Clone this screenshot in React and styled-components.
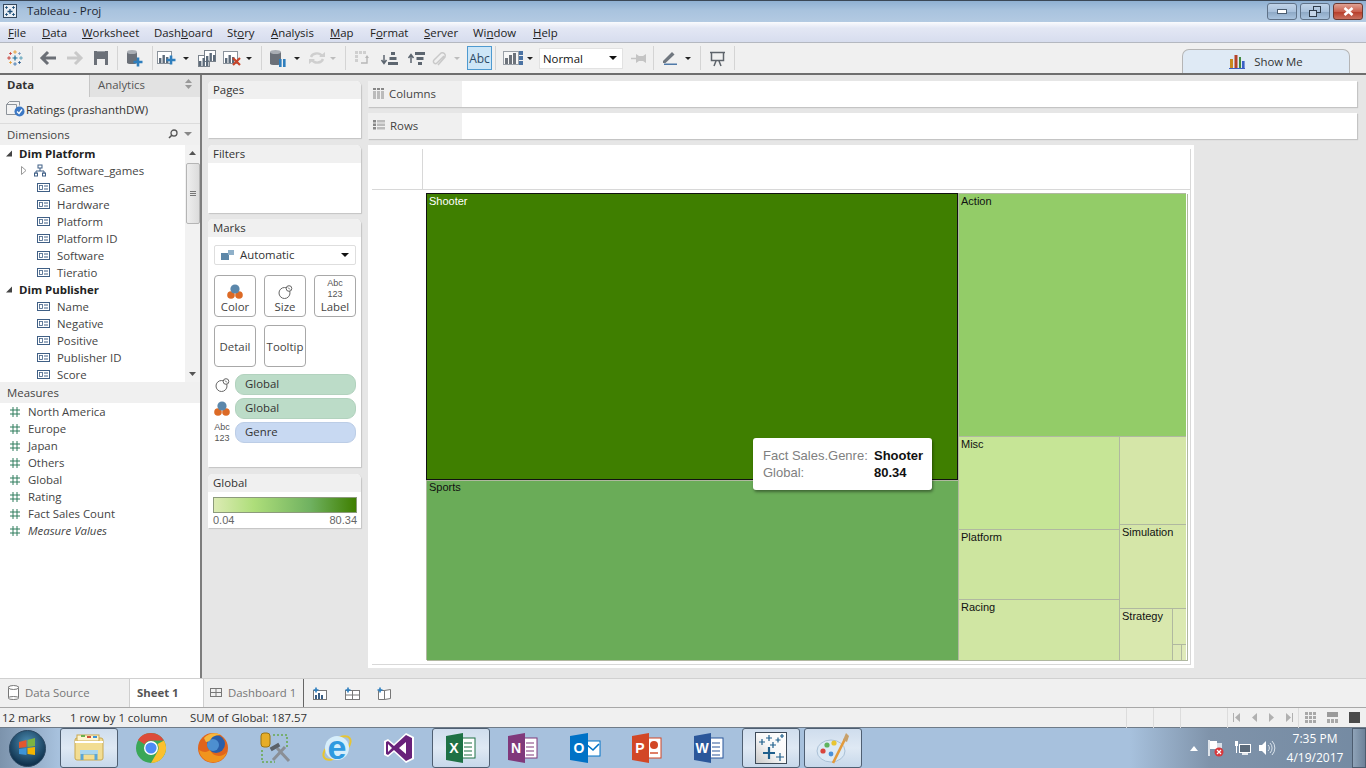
import React from "react";
import styled, { createGlobalStyle } from "styled-components";

const Global = createGlobalStyle`
  html, body { margin: 0; padding: 0; background: #e6e6e6; }
  * { box-sizing: border-box; }
`;

const UI = `"Open Sans", "Noto Sans", sans-serif`;
const VIZ = `"Liberation Sans", Arial, sans-serif`;

const Screen = styled.div`
  width: 1366px;
  height: 768px;
  display: flex;
  flex-direction: column;
  overflow: hidden;
  font-family: ${UI};
  font-size: 11.4px;
  color: #333;
`;

/* ---------- title bar ---------- */
const TitleBar = styled.div`
  height: 22px;
  flex: none;
  display: flex;
  align-items: center;
  padding: 0 3px 1px 3px;
  border-top: 1px solid #3b4756;
  background: linear-gradient(#8fb0d2, #a9c3de 45%, #b3cae2);
  color: #1d2733;
`;
const TitleText = styled.span`
  margin-left: 10px;
  padding-bottom: 2px;
  font-size: 11.6px;
  flex: 1;
`;
const WinButton = styled.div`
  width: 30px;
  height: 17px;
  margin-left: 3px;
  display: flex;
  align-items: center;
  justify-content: center;
  border: 1px solid ${(p) => (p.$close ? "#6b3a32" : "#5f7288")};
  border-radius: 3px;
  background: ${(p) =>
    p.$close
      ? "linear-gradient(#dfa294, #c9614f 50%, #b83f2c 55%, #c9705e)"
      : "linear-gradient(#c0d3e8, #a9c1dc 50%, #8ea9c6 55%, #a9c3de)"};
`;

/* ---------- menu ---------- */
const MenuBar = styled.div`
  height: 21px;
  flex: none;
  display: flex;
  align-items: center;
  padding-left: 8px;
  background: linear-gradient(#fafbfd, #e3e7f4 30%, #d7ddee);
  border-bottom: 1px solid #b4b8c0;
  color: #222;
`;
const MenuItem = styled.span`
  width: ${(p) => p.$w}px;
  flex: none;
  white-space: nowrap;
`;

/* ---------- toolbar ---------- */
const Toolbar = styled.div`
  height: 32px;
  flex: none;
  display: flex;
  align-items: center;
  position: relative;
  background: #f0f0f0;
  border-bottom: 2px solid #6e6e6e;
`;
const Slot = styled.div`
  width: ${(p) => p.$w}px;
  height: 24px;
  flex: none;
  display: flex;
  align-items: center;
  justify-content: center;
`;
const Sep = styled.div`
  width: 1px;
  height: 24px;
  background: #d4d4d4;
`;
const Caret = styled.div`
  width: 0;
  height: 0;
  border-left: 3px solid transparent;
  border-right: 3px solid transparent;
  border-top: 3px solid ${(p) => (p.$off ? "#bdbdbd" : "#222")};
`;
const AbcBox = styled.div`
  width: 25px;
  height: 24px;
  flex: none;
  display: flex;
  align-items: center;
  justify-content: center;
  background: #cde6f7;
  border: 1px solid #4e9ad0;
  color: #2c4a66;
  font-size: 12px;
`;
const FitSelect = styled.div`
  width: 84px;
  height: 21px;
  flex: none;
  display: flex;
  align-items: center;
  justify-content: space-between;
  padding: 0 5px 0 3px;
  background: #fff;
  border: 1px solid #e2e2e2;
  color: #111;
`;
const ArrowDown = styled.div`
  width: 0;
  height: 0;
  border-left: 4px solid transparent;
  border-right: 4px solid transparent;
  border-top: 4px solid #111;
`;
const ShowMe = styled.div`
  position: absolute;
  left: 1182px;
  bottom: 0;
  width: 168px;
  height: 24px;
  display: flex;
  align-items: center;
  justify-content: center;
  gap: 9px;
  background: #dfeaf5;
  border: 1px solid #b5b5b5;
  border-bottom: none;
  border-radius: 7px 7px 0 0;
  color: #333;
`;

/* ---------- main area ---------- */
const Main = styled.div`
  flex: 1;
  min-height: 0;
  display: flex;
  background: #e6e6e6;
`;

const DataPane = styled.div`
  width: 202px;
  flex: none;
  display: flex;
  flex-direction: column;
  background: #fff;
  border-right: 2px solid #7d7d7d;
`;
const PaneTabs = styled.div`
  display: flex;
  height: 22px;
  flex: none;
`;
const PaneTab = styled.div`
  width: ${(p) => p.$w}px;
  flex: none;
  display: flex;
  align-items: center;
  justify-content: space-between;
  padding: 0 ${(p) => (p.$active ? 7 : 8)}px 4px;
  background: ${(p) => (p.$active ? "#f0f0f0" : "#e2e2e2")};
  border-left: ${(p) => (p.$active ? "none" : "1px solid #c6c6c6")};
  font-weight: ${(p) => (p.$active ? 700 : 400)};
  color: ${(p) => (p.$active ? "#333" : "#555")};
`;
const SourceRow = styled.div`
  height: 27px;
  flex: none;
  display: flex;
  align-items: center;
  padding: 0 0 2px 6px;
  background: #f0f0f0;
  border-bottom: 1px solid #dcdcdc;
  color: #333;
`;
const SectionHead = styled.div`
  height: 21px;
  flex: none;
  display: flex;
  align-items: center;
  justify-content: space-between;
  padding: 0 6px 1px 7px;
  background: #f0f0f0;
  color: #444;
`;
const TreeWrap = styled.div`
  height: 237px;
  flex: none;
  display: flex;
`;
const TreeList = styled.div`
  flex: 1;
`;
const FieldRow = styled.div`
  height: ${(p) => p.$h || 17}px;
  display: flex;
  align-items: center;
  white-space: nowrap;
  color: ${(p) => (p.$bold ? "#222" : "#444")};
  font-weight: ${(p) => (p.$bold ? 700 : 400)};
  font-style: ${(p) => (p.$italic ? "italic" : "normal")};
  padding-left: ${(p) => p.$indent}px;
`;
const FieldIcon = styled.span`
  width: ${(p) => p.$w || 20}px;
  flex: none;
  display: flex;
  align-items: center;
`;
const Expander = styled.span`
  width: 13px;
  flex: none;
  display: flex;
  align-items: center;
`;
const HierName = styled.span`
  margin-left: 3px;
`;
const Scrollbar = styled.div`
  width: 15px;
  flex: none;
  display: flex;
  flex-direction: column;
  align-items: center;
  background: #f2f2f2;
`;
const ScrollArrow = styled.div`
  height: 16px;
  flex: none;
  display: flex;
  align-items: center;
  justify-content: center;
`;
const ScrollThumb = styled.div`
  width: 14px;
  height: 61px;
  margin-top: 2px;
  flex: none;
  display: flex;
  flex-direction: column;
  align-items: center;
  justify-content: center;
  gap: 1px;
  background: linear-gradient(90deg, #eee, #dcdcdc);
  border: 1px solid #b5b5b5;
  border-radius: 2px;
  i { width: 6px; height: 1px; background: #777; display: block; }
`;

/* ---------- shelves column ---------- */
const CardsColumn = styled.div`
  width: 166px;
  flex: none;
  display: flex;
  flex-direction: column;
  padding: 6px 7px 0 6px;
`;
const Card = styled.div`
  height: ${(p) => p.$h}px;
  margin-bottom: ${(p) => p.$mb}px;
  flex: none;
  background: #fff;
  border-radius: 5px 5px 0 0;
  box-shadow: 1px 1px 1px #c4c4c4;
`;
const CardHead = styled.div`
  height: 18px;
  display: flex;
  align-items: center;
  padding: 0 0 2px 5px;
  background: #f0f0f0;
  border-radius: 5px 5px 0 0;
  color: #333;
`;
const MarkSelect = styled.div`
  margin: 8px 5px 0 6px;
  height: 20px;
  display: flex;
  align-items: center;
  padding: 0 6px;
  gap: 5px;
  border: 1px solid #dedede;
  border-radius: 2px;
  color: #333;
  span { flex: 1; padding-bottom: 2px; }
`;
const MarkGrid = styled.div`
  display: grid;
  grid-template-columns: repeat(3, 42px);
  grid-auto-rows: 42px;
  gap: 8px;
  padding: 10px 0 0 6px;
`;
const MarkButton = styled.div`
  display: flex;
  flex-direction: column;
  align-items: center;
  justify-content: ${(p) => (p.$plain ? "center" : "flex-end")};
  padding-bottom: ${(p) => (p.$plain ? 0 : 1)}px;
  padding-top: ${(p) => (p.$plain ? 2 : 0)}px;
  border: 1px solid #a8a8a8;
  border-radius: 4px;
  color: #444;
  line-height: 16px;
`;
const PillList = styled.div`
  display: flex;
  flex-direction: column;
  gap: 3px;
  padding: 7px 5px 0 6px;
`;
const PillRow = styled.div`
  display: flex;
  align-items: center;
  gap: 5px;
`;
const PillIcon = styled.span`
  width: 16px;
  flex: none;
  display: flex;
  justify-content: center;
`;
const Pill = styled.div`
  flex: 1;
  height: 21px;
  display: flex;
  align-items: center;
  padding: 0 0 2px 9px;
  border-radius: 9px;
  color: #333;
  background: ${(p) => (p.$kind === "blue" ? "#c8d9f2" : "#bcdcc8")};
  border: 1px solid ${(p) => (p.$kind === "blue" ? "#bccde6" : "#b2d2be")};
`;
const LegendBar = styled.div`
  margin: 5px 4px 0 5px;
  height: 16px;
  border: 1px solid #8c9a7c;
  background: linear-gradient(90deg, #dcebb4, #aede7a 28%, #6fb160 68%, #3f7f00);
`;
const LegendScale = styled.div`
  margin: 1px 4px 0 5px;
  display: flex;
  justify-content: space-between;
  font-family: ${VIZ};
  font-size: 11px;
  line-height: 13px;
  color: #666;
`;

/* ---------- work area ---------- */
const WorkArea = styled.div`
  flex: 1;
  min-width: 0;
  display: flex;
  flex-direction: column;
  padding: 6px 9px 0 0;
`;
const Shelf = styled.div`
  height: 26px;
  margin-bottom: 6px;
  flex: none;
  display: flex;
  background: #fff;
  box-shadow: 1px 1px 1px #c4c4c4;
`;
const ShelfLabel = styled.div`
  width: 94px;
  flex: none;
  display: flex;
  align-items: center;
  gap: 5px;
  padding: 0 0 2px 5px;
  background: #f0f0f0;
  color: #444;
`;
const ViewFrame = styled.div`
  width: 826px;
  height: 523px;
  flex: none;
  padding: 4px 3px 3px 4px;
  background: #fff;
`;
const ViewGrid = styled.div`
  height: 100%;
  display: grid;
  grid-template-columns: 51px 1fr;
  grid-template-rows: 41px 1fr;
  border-right: 1px solid #d8d8d8;
  border-bottom: 1px solid #d8d8d8;
`;
const Corner = styled.div`
  border-right: 1px solid #d8d8d8;
  border-bottom: 1px solid #d8d8d8;
`;
const TopAxis = styled.div`
  border-bottom: 1px solid #d8d8d8;
`;
const LeftAxis = styled.div``;
const PlotArea = styled.div`
  position: relative;
  min-height: 0;
  padding: 3px 3px 4px;
`;
const Tree = styled.div`
  height: 100%;
  display: flex;
  font-family: ${VIZ};
  font-size: 11px;
  line-height: 13px;
  color: #111;
  box-shadow: 1px 1px 0 #b0b8a0;
`;
const TreeCol = styled.div`
  width: ${(p) => p.$w}px;
  flex: none;
  display: flex;
  flex-direction: column;
`;
const TreeRow = styled.div`
  height: ${(p) => p.$h}px;
  flex: none;
  display: flex;
`;
const Cell = styled.div`
  flex: ${(p) => (p.$h || p.$w ? "none" : 1)};
  height: ${(p) => (p.$h ? `${p.$h}px` : "auto")};
  width: ${(p) => (p.$w ? `${p.$w}px` : "auto")};
  padding: ${(p) => (p.$tight ? 0 : 1)}px 0 0 2px;
  background: ${(p) => p.$bg};
  border-style: solid;
  border-width: ${(p) => (p.$dark ? "1px" : "1px 0 0 1px")};
  border-color: ${(p) => (p.$dark ? "#111" : "#b0b8a0")};
  color: ${(p) => (p.$light ? "#fff" : "#111")};
`;
const Tooltip = styled.div`
  position: absolute;
  left: 330px;
  top: 248px;
  width: 179px;
  height: 52px;
  display: grid;
  grid-template-columns: 111px 1fr;
  align-content: center;
  padding-left: 10px;
  background: #fff;
  border-radius: 3px;
  box-shadow: 1px 2px 3px rgba(0, 0, 0, 0.4);
  font-family: ${VIZ};
  font-size: 13px;
  line-height: 17px;
  color: #808080;
  white-space: nowrap;
  b { color: #111; }
`;

/* ---------- bottom ---------- */
const SheetBar = styled.div`
  height: 30px;
  flex: none;
  display: flex;
  background: #f0f0f0;
  border-top: 1px solid #d0d0d0;
  border-bottom: 1px solid #a8a8a8;
`;
const SheetTab = styled.div`
  width: ${(p) => p.$w}px;
  flex: none;
  display: flex;
  align-items: center;
  gap: 6px;
  padding: 0 0 2px ${(p) => p.$pad}px;
  background: ${(p) => (p.$active ? "#fff" : "transparent")};
  border-right: 1px solid ${(p) => p.$line || "#cfcfcf"};
  color: ${(p) => (p.$active ? "#555" : "#777")};
  font-weight: ${(p) => (p.$active ? 700 : 400)};
`;
const SheetActions = styled.div`
  display: flex;
  align-items: center;
  gap: 17px;
  padding-left: 9px;
`;
const StatusBar = styled.div`
  height: 20px;
  flex: none;
  display: flex;
  align-items: center;
  background: #f0f0f0;
  border-bottom: 1px solid #6f7b88;
  color: #333;
  padding-left: 2px;
`;
const StatusText = styled.span`
  width: ${(p) => p.$w}px;
  flex: none;
  white-space: nowrap;
`;
const StatusCell = styled.div`
  width: ${(p) => p.$w}px;
  height: 20px;
  flex: none;
  display: flex;
  align-items: center;
  justify-content: space-around;
  border-left: 1px solid #dcdcdc;
`;
const Filler = styled.div`
  flex: 1;
`;
const Taskbar = styled.div`
  height: 40px;
  flex: none;
  display: flex;
  align-items: center;
  background: linear-gradient(90deg, #a7c1dd 0, #a7c1dd 1130px, #7f93aa 1210px, #748aa2 100%);
`;
const StartSlot = styled.div`
  width: 58px;
  height: 40px;
  flex: none;
  display: flex;
  align-items: center;
  justify-content: center;
  padding-right: 4px;
  background: linear-gradient(90deg, #7c93ac, #a7c1dd);
`;
const TaskSlot = styled.div`
  width: 62px;
  height: 40px;
  flex: none;
  display: flex;
  align-items: center;
  justify-content: center;
  padding: 0 ${(p) => (p.$active ? 2 : 0)}px;
`;
const TaskBtn = styled.div`
  width: 100%;
  height: 100%;
  display: flex;
  align-items: center;
  justify-content: center;
  border-radius: 3px;
  border: ${(p) => (p.$active ? "1px solid #4f5f72" : "none")};
  background: ${(p) => (p.$active ? "linear-gradient(#cfdded, #dfe9f4 50%, #c7d8ea)" : "transparent")};
`;
const Tray = styled.div`
  display: flex;
  align-items: center;
  margin-left: auto;
  height: 40px;
`;
const TrayIcon = styled.span`
  width: ${(p) => p.$w}px;
  flex: none;
  display: flex;
  justify-content: center;
`;
const Clock = styled.div`
  width: 74px;
  flex: none;
  text-align: center;
  color: #fff;
  font-size: 12px;
  line-height: 19px;
`;
const ShowDesktop = styled.div`
  width: 14px;
  height: 40px;
  flex: none;
  border: 1px solid #4d5d70;
  background: linear-gradient(90deg, #8fa3b8, #6d8299);
`;

/* ---------- icons ---------- */
const Svg = ({ w = 16, h = 16, vb, children }) => (
  <svg width={w} height={h} viewBox={vb || `0 0 ${w} ${h}`} style={{ display: "block", flex: "none", overflow: "visible" }}>
    {children}
  </svg>
);

const Plus = ({ x, y, r, c, sw = 1.3 }) => (
  <path d={`M${x - r} ${y}H${x + r}M${x} ${y - r}V${y + r}`} stroke={c} strokeWidth={sw} fill="none" />
);

const TableauLogo = () => (
  <Svg w={16} h={16}>
    <Plus x={8} y={8} r={2.5} c="#1f6f9a" sw={1.2} />
    <Plus x={8} y={2} r={1.8} c="#e8a33d" sw={1} />
    <Plus x={8} y={14} r={1.8} c="#4a7fb5" sw={1} />
    <Plus x={2} y={8} r={1.8} c="#c9433c" sw={1} />
    <Plus x={14} y={8} r={1.8} c="#5aa0b8" sw={1} />
    <Plus x={3.5} y={3.5} r={1.3} c="#c9433c" sw={1} />
    <Plus x={12.5} y={3.5} r={1.3} c="#7a9ac0" sw={1} />
    <Plus x={3.5} y={12.5} r={1.3} c="#e8a33d" sw={1} />
    <Plus x={12.5} y={12.5} r={1.3} c="#2f5f90" sw={1} />
  </Svg>
);
const TitleLogo = () => (
  <Svg w={14} h={14}>
    <rect x=".5" y=".5" width="13" height="13" fill="#e8eef4" stroke="#35485c" />
    <Plus x={7} y={7.5} r={2.5} c="#1c4e78" />
    <Plus x={3.5} y={3.5} r={1.3} c="#1c4e78" sw={1} />
    <Plus x={10.5} y={3.5} r={1.3} c="#1c4e78" sw={1} />
    <Plus x={3.5} y={10.5} r={1.3} c="#1c4e78" sw={1} />
    <Plus x={10.5} y={10.5} r={1.3} c="#1c4e78" sw={1} />
  </Svg>
);
const Back = ({ c = "#6b6f76" }) => (
  <Svg w={16} h={14}><path d="M8 1L2 7l6 6M2.5 7H16" stroke={c} strokeWidth="3" fill="none" /></Svg>
);
const Forward = ({ c = "#c9c9c9" }) => (
  <Svg w={16} h={14}><path d="M8 1l6 6-6 6M13.5 7H0" stroke={c} strokeWidth="3" fill="none" /></Svg>
);
const Save = () => (
  <Svg w={14} h={14}>
    <rect x="0" y="0" width="14" height="14" fill="#6b7078" />
    <rect x="3" y="8" width="8" height="6" fill="#f0f0f0" />
    <rect x="3" y="0" width="8" height="1" fill="#9a9ea4" />
  </Svg>
);
const Drum = ({ x = 0, y = 0, w = 10, h = 14, c = "#6b7078" }) => (
  <g>
    <rect x={x} y={y + 2} width={w} height={h - 3} fill={c} />
    <ellipse cx={x + w / 2} cy={y + h - 1.5} rx={w / 2} ry={1.5} fill={c} />
    <ellipse cx={x + w / 2} cy={y + 2} rx={w / 2} ry={2} fill="#a9adb3" />
  </g>
);
const NewSource = () => (
  <Svg w={16} h={17}>
    <Drum w={10} h={14} />
    <Plus x={11} y={12} r={4.5} c="#2e7ebd" sw={2.6} />
  </Svg>
);
const Bars = ({ x = 0, y = 0, c = "#5d6b7a" }) => (
  <g fill={c}>
    <rect x={x + 2} y={y + 7} width="2.4" height="5" />
    <rect x={x + 5.5} y={y + 4} width="2.4" height="8" />
    <rect x={x + 9} y={y + 6} width="2.4" height="6" />
  </g>
);
const NewWorksheet = () => (
  <Svg w={20} h={16}>
    <rect x=".5" y="1.5" width="14" height="12" fill="#fff" stroke="#8b939c" />
    <Bars x={0} y={1} />
    <Plus x={14} y={10} r={4.5} c="#2e7ebd" sw={2.6} />
  </Svg>
);
const Duplicate = () => (
  <Svg w={18} h={17}>
    <rect x=".5" y="5.5" width="11" height="11" fill="#fff" stroke="#7b838c" />
    <rect x="6.5" y=".5" width="11" height="11" fill="#fff" stroke="#7b838c" />
    <Bars x={-1} y={4} />
    <Bars x={6} y={-1} />
  </Svg>
);
const ClearSheet = () => (
  <Svg w={19} h={16}>
    <rect x=".5" y="1.5" width="14" height="12" fill="#fff" stroke="#8b939c" />
    <Bars x={0} y={1} />
    <path d="M10 8l7 7M17 8l-7 7" stroke="#c8452a" strokeWidth="2.2" />
  </Svg>
);
const PauseData = () => (
  <Svg w={16} h={17}>
    <Drum w={11} h={15} />
    <rect x="9" y="9" width="2.6" height="8" fill="#2e7ebd" />
    <rect x="13" y="9" width="2.6" height="8" fill="#2e7ebd" />
  </Svg>
);
const Refresh = () => (
  <Svg w={16} h={14}>
    <path d="M2 6a6 5 0 0 1 11-1M14 8a6 5 0 0 1-11 1" stroke="#cfcfcf" strokeWidth="2.4" fill="none" />
    <path d="M10 6h6V1zM6 8H0v5z" fill="#cfcfcf" />
  </Svg>
);
const Swap = () => (
  <Svg w={14} h={14}>
    <g fill="#cfcfcf">
      <rect x="0" y="0" width="3" height="3" /><rect x="4" y="0" width="3" height="3" />
      <rect x="8" y="0" width="3" height="3" /><rect x="0" y="4" width="3" height="3" />
      <rect x="0" y="8" width="3" height="3" />
    </g>
    <path d="M6 12h6V6" stroke="#b6b6b6" strokeWidth="1.4" fill="none" />
    <path d="M10 7l2-3 2 3z" fill="#b6b6b6" />
  </Svg>
);
const Sort = ({ flip }) => (
  <Svg w={17} h={13}>
    <path d="M3 11V3M0.5 8L3 11.5 5.5 8" stroke="#5d6670" strokeWidth="1.5" fill="none" transform={flip ? "rotate(180 3 7)" : ""} />
    {flip ? (
      <path d="M7 0h10v3H7zM8.5 5h7v3h-7zM10 10h4v3h-4z" fill="#5d6670" />
    ) : (
      <path d="M7 10h10v3H7zM8.5 5h7v3h-7zM10 0h4v3h-4z" fill="#5d6670" />
    )}
  </Svg>
);
const Clip = () => (
  <Svg w={15} h={15}>
    <path d="M12 4L5 11a2 2 0 0 1-3-3l7-7a3 3 0 0 1 4 4l-7 8" transform="translate(0 1)" stroke="#c9c9c9" strokeWidth="1.5" fill="none" />
  </Svg>
);
const ChartPick = () => (
  <Svg w={20} h={14}>
    <rect x=".5" y=".5" width="15" height="13" fill="#f7f7f7" stroke="#9aa0a7" />
    <g fill="#6d737b"><rect x="2" y="7" width="3" height="6" /><rect x="6" y="4" width="3" height="9" /><rect x="10" y="2" width="3" height="11" /></g>
    <g fill="#4b73a3"><rect x="16" y="0" width="4" height="4" /><rect x="16" y="5" width="4" height="4" /><rect x="16" y="10" width="4" height="4" /></g>
  </Svg>
);
const Pin = () => (
  <Svg w={15} h={9}>
    <path d="M0 4.5h5" stroke="#c4c4c4" strokeWidth="1.5" />
    <path d="M5 0l3 2h4l3-2v9l-3-2H8L5 9z" fill="#c4c4c4" />
  </Svg>
);
const Pen = () => (
  <Svg w={16} h={14}>
    <path d="M2 10L11 1l2.5 2.5-9 8.5H2z" fill="#70777f" />
    <rect x="3" y="12.5" width="13" height="1.5" fill="#4f79a8" />
  </Svg>
);
const Easel = () => (
  <Svg w={15} h={15}>
    <path d="M0 1.5h15M1.5 1.5v8h12v-8M4 15l2-5M11 15l-2-5" stroke="#5e646b" strokeWidth="1.5" fill="none" />
  </Svg>
);
const ShowMeBars = () => (
  <Svg w={16} h={14}>
    <rect x="1" y="4" width="3" height="9" fill="#c98a1e" />
    <rect x="5.5" y="0" width="3" height="13" fill="#b5432a" />
    <rect x="10" y="2" width="2" height="11" fill="#3f8a3f" />
    <rect x="13" y="6" width="2.6" height="7" fill="#3a5fc4" />
    <rect x="0" y="13" width="16" height="1" fill="#3a5fc4" />
  </Svg>
);

const Minimize = () => <Svg w={10} h={5}><rect x=".5" y=".5" width="9" height="4" fill="#fff" stroke="#4a5c70" /></Svg>;
const Restore = () => (
  <Svg w={12} h={11}>
    <rect x="4.5" y=".5" width="7" height="6" fill="none" stroke="#2f3c4b" />
    <rect x=".5" y="4.5" width="7" height="6" fill="#c4d5e8" stroke="#2f3c4b" />
  </Svg>
);
const CloseX = () => (
  <Svg w={11} h={9}><path d="M1.5 1l8 7M9.5 1l-8 7" stroke="#fff" strokeWidth="2.6" /></Svg>
);

const SourceIcon = () => (
  <Svg w={20} h={16}>
    <path d="M.5 3.5h10v10H.5zM.5 3.5l3-3h10v4" fill="#f3f3f3" stroke="#8d939a" />
    <circle cx="13.5" cy="10.5" r="5" fill="#3c78c4" />
    <path d="M11 10.5l2 2 3-4" stroke="#fff" strokeWidth="1.3" fill="none" />
  </Svg>
);
const Magnifier = () => (
  <Svg w={10} h={10}>
    <circle cx="6" cy="4" r="3" fill="none" stroke="#555" strokeWidth="1.3" />
    <path d="M4 6L1 9" stroke="#555" strokeWidth="1.6" />
  </Svg>
);
const SmallCaret = () => <Svg w={8} h={4}><path d="M0 0h8L4 4z" fill="#888" /></Svg>;
const SpinGlyph = () => (
  <Svg w={7} h={10}>
    <path d="M0 4l3.5-4L7 4zM0 6l3.5 4L7 6z" fill="#999" />
  </Svg>
);
const Open = () => <Svg w={7} h={7}><path d="M6 0.5V6.5H0z" fill="#444" /></Svg>;
const Closed = () => <Svg w={6} h={9}><path d="M.5.5L5 4.5.5 8.5z" fill="#fff" stroke="#999" /></Svg>;
const Hierarchy = () => (
  <Svg w={12} h={11}>
    <path d="M6 3v3M2 9V6h8v3" stroke="#3f5f85" fill="none" />
    <rect x="4" y="0" width="4" height="3" fill="none" stroke="#3f5f85" />
    <rect x="0.5" y="8" width="3" height="3" fill="none" stroke="#3f5f85" />
    <rect x="8.5" y="8" width="3" height="3" fill="none" stroke="#3f5f85" />
  </Svg>
);
const FieldGlyph = () => (
  <Svg w={13} h={9}>
    <rect x=".5" y=".5" width="12" height="8" fill="#fff" stroke="#3f5f85" />
    <rect x="2.5" y="2.5" width="3" height="4" fill="none" stroke="#3f5f85" strokeWidth=".8" />
    <path d="M7 3h4M7 6h4" stroke="#3f5f85" />
  </Svg>
);
const Hash = () => (
  <Svg w={10} h={10}>
    <path d="M3 0v10M7 0v10M0 3h10M0 7h10" stroke="#2f7d5c" strokeWidth="1" />
  </Svg>
);

const ColumnsIcon = () => (
  <Svg w={11} h={11}>
    <rect x="0" y="0" width="3" height="2" fill="#888" /><rect x="4" y="0" width="3" height="2" fill="#888" /><rect x="8" y="0" width="3" height="2" fill="#888" />
    <rect x="0" y="3" width="3" height="8" fill="#bbb" /><rect x="4" y="3" width="3" height="8" fill="#bbb" /><rect x="8" y="3" width="3" height="8" fill="#bbb" />
  </Svg>
);
const RowsIcon = () => (
  <Svg w={12} h={10}>
    <rect x="0" y="0" width="3" height="2.5" fill="#888" /><rect x="0" y="3.5" width="3" height="2.5" fill="#888" /><rect x="0" y="7" width="3" height="2.5" fill="#888" />
    <rect x="4" y="0" width="8" height="2.5" fill="#bbb" /><rect x="4" y="3.5" width="8" height="2.5" fill="#bbb" /><rect x="4" y="7" width="8" height="2.5" fill="#bbb" />
  </Svg>
);
const MarkShape = () => (
  <Svg w={14} h={10}>
    <rect x="0" y="3" width="8" height="7" fill="#5d87a8" />
    <rect x="7" y="0" width="6" height="5" fill="#8fb0c9" />
  </Svg>
);
const ColorDots = () => (
  <Svg w={16} h={15}>
    <circle cx="4" cy="11" r="3.8" fill="#dc6a26" />
    <circle cx="12" cy="11" r="3.8" fill="#dc6a26" />
    <circle cx="8" cy="5" r="4.6" fill="#5b87ab" />
  </Svg>
);
const SizeIcon = () => (
  <Svg w={15} h={14}>
    <circle cx="6.5" cy="8" r="5.5" fill="#fff" stroke="#666" />
    <circle cx="11" cy="3.5" r="2.8" fill="#fff" stroke="#666" />
    <path d="M10 2.5l2 2" stroke="#666" />
  </Svg>
);
const AbcStack = styled.span`
  display: flex;
  flex-direction: column;
  align-items: center;
  font-family: ${VIZ};
  font-size: 9px;
  line-height: 10.5px;
  color: #555;
`;

const Orb = () => (
  <Svg w={37} h={37}>
    <defs>
      <radialGradient id="orb" cx="50%" cy="35%" r="60%">
        <stop offset="0" stopColor="#4d8fb5" />
        <stop offset="1" stopColor="#10324e" />
      </radialGradient>
    </defs>
    <circle cx="18.5" cy="18.5" r="18" fill="url(#orb)" stroke="#2a4660" />
    <path d="M10 12l7.5-2v7l-7.5 1z" fill="#e4572e" />
    <path d="M18.5 10l7.5-2v8l-7.5 1z" fill="#7cb342" />
    <path d="M10 19l7.5-1v7l-7.5-1z" fill="#3d93d6" />
    <path d="M18.5 18l7.5-1v8l-7.5-1z" fill="#f4b400" />
  </Svg>
);
const ExplorerIcon = () => (
  <Svg w={32} h={32}>
    <rect x="2" y="6" width="28" height="22" rx="2" fill="#f2dd93" stroke="#c9a84f" />
    <rect x="4" y="3" width="22" height="6" fill="#fdf4cf" stroke="#c9a84f" />
    <rect x="8" y="3" width="4" height="2" fill="#6ab04c" /><rect x="14" y="4" width="4" height="2" fill="#d0503c" /><rect x="20" y="4" width="4" height="2" fill="#3d93d6" />
    <path d="M2 10h28" stroke="#fff" strokeWidth="2" />
    <path d="M9 28v-7h14v7" stroke="#5ba6d6" strokeWidth="3" fill="none" />
    <rect x="7" y="18" width="18" height="4" fill="#a9d6ef" />
  </Svg>
);
const ChromeIcon = () => (
  <Svg w={30} h={30}>
    <circle cx="15" cy="15" r="15" fill="#3aa757" />
    <path d="M15 0a15 15 0 0 1 13 7.5H15a7.5 7.5 0 0 0-6.5 3.8L2 7A15 15 0 0 1 15 0z" fill="#dd4b39" />
    <path d="M28 7.5A15 15 0 0 1 15 30l6.5-11.2A7.5 7.5 0 0 0 21.5 11z" fill="#fbc02d" />
    <circle cx="15" cy="15" r="7" fill="#fff" />
    <circle cx="15" cy="15" r="5.6" fill="#4c8bf5" />
  </Svg>
);
const FirefoxIcon = () => (
  <Svg w={30} h={32}>
    <circle cx="15" cy="16" r="15" fill="#e0641c" />
    <circle cx="18" cy="12" r="9" fill="#2a5ea8" />
    <circle cx="15" cy="13" r="6" fill="#4d8fd0" />
    <path d="M1 18c2 14 22 18 28 2-5 6-14 5-17-2-2 2-6 3-11 0z" fill="#f0941e" />
    <path d="M6 6c4-5 12-6 17-3-5 0-8 1-10 4-1 2-3 3-5 3z" fill="#f6b73c" />
  </Svg>
);
const ToolsIcon = () => (
  <Svg w={32} h={32}>
    <path d="M14 3h14v14M3 18v12h13" stroke="#6aa84f" strokeWidth="1.6" strokeDasharray="2 2" fill="none" />
    <rect x="2" y="1" width="9" height="14" rx="3" fill="#e6ad28" stroke="#9a7412" />
    <path d="M14 28L26 15M18 16l12 13" stroke="#8a8f96" strokeWidth="3" />
    <rect x="11" y="13" width="10" height="4" fill="#5b6168" transform="rotate(-30 16 15)" />
  </Svg>
);
const IeIcon = () => (
  <Svg w={30} h={32}>
    <ellipse cx="15" cy="16" rx="16" ry="8" fill="none" stroke="#e8c531" strokeWidth="2" transform="rotate(-38 15 16)" />
    <circle cx="15" cy="16" r="12" fill="#d6eefb" />
    <text x="15" y="27" textAnchor="middle" fontFamily={VIZ} fontWeight="700" fontSize="34" fill="#2f9ae0">e</text>
  </Svg>
);
const VsIcon = () => (
  <Svg w={32} h={32}>
    <path d="M23 1l8 4v22l-8 4-12-11-6 5-4-2V9l4-2 6 5z" fill="#fff" />
    <path d="M23 3l6 3v20l-6 3-12-11-6 5-2-1V10l2-1 6 5zM23 10l-7 6 7 6zM5 12v8l4-4z" fill="#68217a" fillRule="evenodd" />
  </Svg>
);
const OfficeIcon = ({ letter, dark }) => (
  <Svg w={30} h={30}>
    <rect x="14" y="5" width="15" height="20" fill="#fff" stroke={dark} />
    <path d="M18 10h8M18 14h8M18 18h8M18 22h8" stroke={dark} strokeWidth="1.2" />
    <path d="M0 3L17 0v30L0 27z" fill={dark} />
    <text x="8" y="20" textAnchor="middle" fontFamily={VIZ} fontWeight="700" fontSize="14" fill="#fff">{letter}</text>
  </Svg>
);
const OutlookIcon = () => (
  <Svg w={30} h={30}>
    <rect x="15" y="8" width="15" height="15" fill="#fff" stroke="#0072c6" />
    <path d="M16 11l7 6 6-6" stroke="#0072c6" strokeWidth="1.6" fill="none" />
    <path d="M0 3L18 0v30L0 27z" fill="#0072c6" />
    <text x="9" y="20" textAnchor="middle" fontFamily={VIZ} fontWeight="700" fontSize="14" fill="#fff">O</text>
  </Svg>
);
const PptIcon = () => (
  <Svg w={30} h={30}>
    <rect x="14" y="5" width="15" height="20" fill="#fff" stroke="#d24726" />
    <circle cx="22" cy="12" r="4" fill="#d24726" />
    <path d="M18 20h8" stroke="#d24726" strokeWidth="1.4" />
    <path d="M0 3L17 0v30L0 27z" fill="#d24726" />
    <text x="8" y="20" textAnchor="middle" fontFamily={VIZ} fontWeight="700" fontSize="14" fill="#fff">P</text>
  </Svg>
);
const TableauTask = () => (
  <Svg w={32} h={32}>
    <defs>
      <linearGradient id="tile" x1="0" y1="1" x2="1" y2="0">
        <stop offset="0" stopColor="#c8c8c8" />
        <stop offset=".5" stopColor="#f8f8f8" />
        <stop offset="1" stopColor="#fff" />
      </linearGradient>
    </defs>
    <rect x=".5" y=".5" width="31" height="31" fill="url(#tile)" stroke="#3d4a58" />
    <Plus x={14} y={21} r={6} c="#1f5f8c" sw={2.2} />
    <Plus x={25} y={25} r={4} c="#1f5f8c" sw={1.2} />
    <Plus x={7} y={10} r={3} c="#1f5f8c" sw={1.2} />
    <Plus x={14} y={6} r={3} c="#1f5f8c" sw={1.2} />
    <Plus x={18} y={13} r={3} c="#1f5f8c" sw={1.2} />
    <Plus x={23} y={8} r={2.5} c="#1f5f8c" sw={1.2} />
    <Plus x={27} y={4} r={2} c="#1f5f8c" sw={1.2} />
  </Svg>
);
const PaintIcon = () => (
  <Svg w={32} h={32}>
    <ellipse cx="14" cy="19" rx="14" ry="11" fill="#dce9f5" stroke="#a9c0d6" />
    <circle cx="6" cy="19" r="2.6" fill="#d8443c" />
    <circle cx="10" cy="13" r="2.6" fill="#5fb35f" />
    <circle cx="17" cy="11" r="2.6" fill="#e8c531" />
    <circle cx="14" cy="22" r="2.4" fill="#4a90d9" />
    <path d="M16 31L28 7" stroke="#e29a3c" strokeWidth="2.6" />
    <path d="M26 8l3-7 3 3-2 6z" fill="#c8a06a" />
  </Svg>
);
const TrayFlag = () => (
  <Svg w={16} h={18}>
    <path d="M1 1v16" stroke="#fff" strokeWidth="1.5" />
    <path d="M2 2h7v8H2z" fill="#fff" />
    <path d="M9 4h5v5H9z" fill="#d6dfe8" />
    <circle cx="11" cy="13" r="4.5" fill="#d8383c" />
    <path d="M9 11l4 4M13 11l-4 4" stroke="#fff" strokeWidth="1.2" />
  </Svg>
);
const TrayNet = () => (
  <Svg w={16} h={14}>
    <rect x="4.5" y="3.5" width="11" height="8" fill="#5c6b7b" stroke="#fff" />
    <path d="M7 13h6" stroke="#fff" strokeWidth="1.6" />
    <rect x="0" y="0" width="3" height="5" fill="#fff" />
    <path d="M1.5 5v7" stroke="#fff" />
  </Svg>
);
const TraySound = () => (
  <Svg w={16} h={14}>
    <path d="M0 4h3l4-4v14l-4-4H0z" fill="#fff" />
    <path d="M9 4a4 4 0 0 1 0 6M11 2a7 7 0 0 1 0 10M13 0a10 10 0 0 1 0 14" stroke="#dbe4ec" fill="none" />
  </Svg>
);
const NavGlyph = ({ dir, bar }) => (
  <Svg w={8} h={9}>
    <path d={dir === "l" ? "M7 0v9L2 4.5z" : "M1 0v9l5-4.5z"} fill="#b0b0b0" />
    {bar && <rect x={dir === "l" ? 0 : 7} y="0" width="1" height="9" fill="#b0b0b0" />}
  </Svg>
);
const GridGlyph = () => (
  <Svg w={11} h={11}>
    <g fill="#a8a8a8">
      {[0, 4, 8].map((y) => [0, 4, 8].map((x) => <rect key={`${x}-${y}`} x={x} y={y} width="3" height="3" />))}
    </g>
  </Svg>
);
const SplitGlyph = () => (
  <Svg w={11} h={11}>
    <rect x="0" y="0" width="11" height="5" fill="#9a9a9a" />
    <g fill="#a8a8a8"><rect x="0" y="7" width="3" height="4" /><rect x="4" y="7" width="3" height="4" /><rect x="8" y="7" width="3" height="4" /></g>
  </Svg>
);
const FullGlyph = () => <Svg w={11} h={11}><rect width="11" height="11" fill="#4a4a4a" /></Svg>;
const Cylinder = () => (
  <Svg w={11} h={15}>
    <rect x=".5" y="2" width="10" height="11" fill="#fff" stroke="#777" />
    <ellipse cx="5.5" cy="2.5" rx="5" ry="2" fill="#fff" stroke="#777" />
    <ellipse cx="5.5" cy="13" rx="5" ry="1.5" fill="#fff" stroke="#777" />
  </Svg>
);
const TabDash = () => (
  <Svg w={12} h={9}>
    <rect x=".5" y=".5" width="11" height="8" fill="none" stroke="#777" />
    <path d="M6 .5v8M.5 4.5h11" stroke="#777" />
  </Svg>
);
const AddSheet = () => (
  <Svg w={15} h={13}>
    <rect x=".5" y="3.5" width="13" height="9" fill="#fff" stroke="#777" />
    <path d="M3 12V8M6 12V6M9 12V8" stroke="#3a5f85" strokeWidth="2" />
    <Plus x={3} y={3} r={2.5} c="#2e7ebd" sw={1.6} />
  </Svg>
);
const AddDash = () => (
  <Svg w={15} h={13}>
    <rect x=".5" y="3.5" width="14" height="9" fill="#fff" stroke="#777" />
    <path d="M7.5 3.5v9M.5 8h14" stroke="#777" />
    <Plus x={3} y={3} r={2.5} c="#2e7ebd" sw={1.6} />
  </Svg>
);
const AddStory = () => (
  <Svg w={15} h={13}>
    <path d="M1.5 3.5h6v9h-6zM7.5 3.5l6-1v9l-6 1z" fill="#fff" stroke="#777" />
    <Plus x={3} y={3} r={2.5} c="#2e7ebd" sw={1.6} />
  </Svg>
);

/* ---------- data ---------- */
const menus = [
  ["F", "ile", 34],
  ["D", "ata", 40],
  ["W", "orksheet", 72],
  ["Dash", "b", 73, "oard"],
  ["St", "o", 44, "ry"],
  ["A", "nalysis", 59],
  ["M", "ap", 40],
  ["F", "o", 54, "rmat"],
  ["S", "erver", 49],
  ["Wi", "n", 60, "dow"],
  ["H", "elp", 40],
];

const tools = [
  [30, <TableauLogo />],
  [4, <Sep />],
  [28, <Back />],
  [26, <Forward />],
  [26, <Save />],
  [6, <Sep />],
  [30, <NewSource />],
  [4, <Sep />],
  [26, <NewWorksheet />],
  [12, <Caret />],
  [30, <Duplicate />],
  [20, <ClearSheet />],
  [14, <Caret />],
  [10, <Sep />],
  [24, <PauseData />],
  [14, <Caret />],
  [26, <Refresh />],
  [6, <Caret $off />],
  [18, <Sep />],
  [16, <Swap />],
  [38, <Sort />],
  [16, <Sort flip />],
  [30, <Clip />],
  [6, <Caret $off />],
  [7, null],
];

const platform = ["Games", "Hardware", "Platform", "Platform ID", "Software", "Tieratio"];
const publisher = ["Name", "Negative", "Positive", "Publisher ID"];
const measures = ["North America", "Europe", "Japan", "Others", "Global", "Rating", "Fact Sales Count"];

const dock = [
  [<ExplorerIcon />, true],
  [<ChromeIcon />],
  [<FirefoxIcon />],
  [<ToolsIcon />],
  [<IeIcon />],
  [<VsIcon />],
  [<OfficeIcon letter="X" dark="#1e7145" />, true],
  [<OfficeIcon letter="N" dark="#80397b" />],
  [<OutlookIcon />],
  [<PptIcon />],
  [<OfficeIcon letter="W" dark="#2b579a" />],
  [<TableauTask />, true],
  [<PaintIcon />, true],
];

const Abc = () => (
  <AbcStack>
    <span>Abc</span>
    <span>123</span>
  </AbcStack>
);

export default function App() {
  return (
    <Screen>
      <Global />
      <TitleBar>
        <TitleLogo />
        <TitleText>Tableau - Proj</TitleText>
        <WinButton><Minimize /></WinButton>
        <WinButton><Restore /></WinButton>
        <WinButton $close><CloseX /></WinButton>
      </TitleBar>

      <MenuBar>
        {menus.map(([a, b, w, c]) => (
          <MenuItem key={a + b} $w={w}>
            {c ? (
              <>
                {a}
                <u>{b}</u>
                {c}
              </>
            ) : (
              <>
                <u>{a}</u>
                {b}
              </>
            )}
          </MenuItem>
        ))}
      </MenuBar>

      <Toolbar>
        {tools.map(([w, icon], i) => (
          <Slot key={i} $w={w}>{icon}</Slot>
        ))}
        <AbcBox>Abc</AbcBox>
        <Slot $w={7}><Sep /></Slot>
        <Slot $w={28}><ChartPick /></Slot>
        <Slot $w={6}><Caret /></Slot>
        <Slot $w={6} />
        <FitSelect>
          Normal
          <ArrowDown />
        </FitSelect>
        <Slot $w={30}><Pin /></Slot>
        <Slot $w={1}><Sep /></Slot>
        <Slot $w={30}><Pen /></Slot>
        <Slot $w={8}><Caret /></Slot>
        <Slot $w={16}><Sep /></Slot>
        <Slot $w={18}><Easel /></Slot>
        <Slot $w={16}><Sep /></Slot>
        <ShowMe>
          <ShowMeBars />
          Show Me
        </ShowMe>
      </Toolbar>

      <Main>
        <DataPane>
          <PaneTabs>
            <PaneTab $w={89} $active>Data</PaneTab>
            <PaneTab $w={111}>
              Analytics
              <SpinGlyph />
            </PaneTab>
          </PaneTabs>
          <SourceRow>
            <SourceIcon />
            Ratings (prashanthDW)
          </SourceRow>
          <SectionHead>
            Dimensions
            <Slot $w={28}><Magnifier /><Slot $w={6} /><SmallCaret /></Slot>
          </SectionHead>
          <TreeWrap>
            <TreeList>
              <FieldRow $bold $indent={6}><Expander><Open /></Expander>Dim Platform</FieldRow>
              <FieldRow $indent={21}>
                <Expander><Closed /></Expander>
                <FieldIcon><Hierarchy /></FieldIcon>
                <HierName>Software_games</HierName>
              </FieldRow>
              {platform.map((f) => (
                <FieldRow key={f} $indent={37}><FieldIcon><FieldGlyph /></FieldIcon>{f}</FieldRow>
              ))}
              <FieldRow $bold $indent={6}><Expander><Open /></Expander>Dim Publisher</FieldRow>
              {publisher.map((f) => (
                <FieldRow key={f} $indent={37}><FieldIcon><FieldGlyph /></FieldIcon>{f}</FieldRow>
              ))}
              <FieldRow $h={16} $indent={37}><FieldIcon><FieldGlyph /></FieldIcon>Score</FieldRow>
            </TreeList>
            <Scrollbar>
              <ScrollArrow><Svg w={7} h={4}><path d="M0 4h7L3.5 0z" fill="#555" /></Svg></ScrollArrow>
              <ScrollThumb><i /><i /><i /></ScrollThumb>
              <Filler />
              <ScrollArrow><Svg w={7} h={4}><path d="M0 0h7L3.5 4z" fill="#555" /></Svg></ScrollArrow>
            </Scrollbar>
          </TreeWrap>
          <SectionHead>Measures</SectionHead>
          {measures.map((f) => (
            <FieldRow key={f} $indent={10}><FieldIcon $w={18}><Hash /></FieldIcon>{f}</FieldRow>
          ))}
          <FieldRow $italic $indent={10}><FieldIcon $w={18}><Hash /></FieldIcon>Measure Values</FieldRow>
        </DataPane>

        <CardsColumn>
          <Card $h={57} $mb={7}><CardHead>Pages</CardHead></Card>
          <Card $h={68} $mb={6}><CardHead>Filters</CardHead></Card>
          <Card $h={248} $mb={7}>
            <CardHead>Marks</CardHead>
            <MarkSelect>
              <MarkShape />
              <span>Automatic</span>
              <ArrowDown />
            </MarkSelect>
            <MarkGrid>
              <MarkButton><ColorDots />Color</MarkButton>
              <MarkButton><SizeIcon />Size</MarkButton>
              <MarkButton><Abc />Label</MarkButton>
              <MarkButton $plain>Detail</MarkButton>
              <MarkButton $plain>Tooltip</MarkButton>
            </MarkGrid>
            <PillList>
              <PillRow><PillIcon><SizeIcon /></PillIcon><Pill>Global</Pill></PillRow>
              <PillRow><PillIcon><ColorDots /></PillIcon><Pill>Global</Pill></PillRow>
              <PillRow><PillIcon><Abc /></PillIcon><Pill $kind="blue">Genre</Pill></PillRow>
            </PillList>
          </Card>
          <Card $h={54} $mb={0}>
            <CardHead>Global</CardHead>
            <LegendBar />
            <LegendScale><span>0.04</span><span>80.34</span></LegendScale>
          </Card>
        </CardsColumn>

        <WorkArea>
          <Shelf><ShelfLabel><ColumnsIcon />Columns</ShelfLabel></Shelf>
          <Shelf><ShelfLabel><RowsIcon />Rows</ShelfLabel></Shelf>
          <ViewFrame>
            <ViewGrid>
              <Corner />
              <TopAxis />
              <LeftAxis />
              <PlotArea>
                <Tree>
                  <TreeCol $w={532}>
                    <Cell $h={287} $bg="#3f7f00" $dark $light>Shooter</Cell>
                    <Cell $bg="#6aac58" $tight>Sports</Cell>
                  </TreeCol>
                  <TreeCol $w={228}>
                    <Cell $h={243} $bg="#93cc68">Action</Cell>
                    <TreeRow $h={224}>
                      <TreeCol $w={161}>
                        <Cell $h={93} $bg="#c6e596">Misc</Cell>
                        <Cell $h={70} $bg="#cde59f">Platform</Cell>
                        <Cell $bg="#d0e6a3">Racing</Cell>
                      </TreeCol>
                      <TreeCol $w={67}>
                        <Cell $h={88} $bg="#d5e6a8" />
                        <Cell $h={84} $bg="#d5e6a8">Simulation</Cell>
                        <TreeRow $h={52}>
                          <Cell $w={53} $bg="#d9e8ae">Strategy</Cell>
                          <TreeCol $w={14}>
                            <Cell $h={36} $bg="#dbe9b2" />
                            <TreeRow $h={16}>
                              <Cell $w={9} $bg="#dde9b6" />
                              <Cell $w={5} $bg="#dfeaba" />
                            </TreeRow>
                          </TreeCol>
                        </TreeRow>
                      </TreeCol>
                    </TreeRow>
                  </TreeCol>
                </Tree>
                <Tooltip>
                  <span>Fact Sales.Genre:</span>
                  <b>Shooter</b>
                  <span>Global:</span>
                  <b>80.34</b>
                </Tooltip>
              </PlotArea>
            </ViewGrid>
          </ViewFrame>
        </WorkArea>
      </Main>

      <SheetBar>
        <SheetTab $w={130} $pad={8}><Cylinder />Data Source</SheetTab>
        <SheetTab $w={74} $pad={7} $active>Sheet 1</SheetTab>
        <SheetTab $w={100} $pad={6} $line="#666"><TabDash />Dashboard 1</SheetTab>
        <SheetActions>
          <AddSheet />
          <AddDash />
          <AddStory />
        </SheetActions>
      </SheetBar>

      <StatusBar>
        <StatusText $w={68}>12 marks</StatusText>
        <StatusText $w={120}>1 row by 1 column</StatusText>
        <StatusText $w={160}>SUM of Global: 187.57</StatusText>
        <Filler />
        <StatusCell $w={27} />
        <StatusCell $w={27} />
        <StatusCell $w={47} />
        <StatusCell $w={71}>
          <NavGlyph dir="l" bar />
          <NavGlyph dir="l" />
          <NavGlyph dir="r" />
          <NavGlyph dir="r" bar />
        </StatusCell>
        <StatusCell $w={68}>
          <GridGlyph />
          <SplitGlyph />
          <FullGlyph />
        </StatusCell>
      </StatusBar>

      <Taskbar>
        <StartSlot><Orb /></StartSlot>
        {dock.map(([icon, active], i) => (
          <TaskSlot key={i} $active={active}>
            <TaskBtn $active={active}>{icon}</TaskBtn>
          </TaskSlot>
        ))}
        <Tray>
          <TrayIcon $w={16}><Svg w={8} h={5}><path d="M0 5h8L4 0z" fill="#fff" /></Svg></TrayIcon>
          <TrayIcon $w={28}><TrayFlag /></TrayIcon>
          <TrayIcon $w={26}><TrayNet /></TrayIcon>
          <TrayIcon $w={22}><TraySound /></TrayIcon>
          <Clock>
            7:35 PM
            <br />
            4/19/2017
          </Clock>
          <ShowDesktop />
        </Tray>
      </Taskbar>
    </Screen>
  );
}
